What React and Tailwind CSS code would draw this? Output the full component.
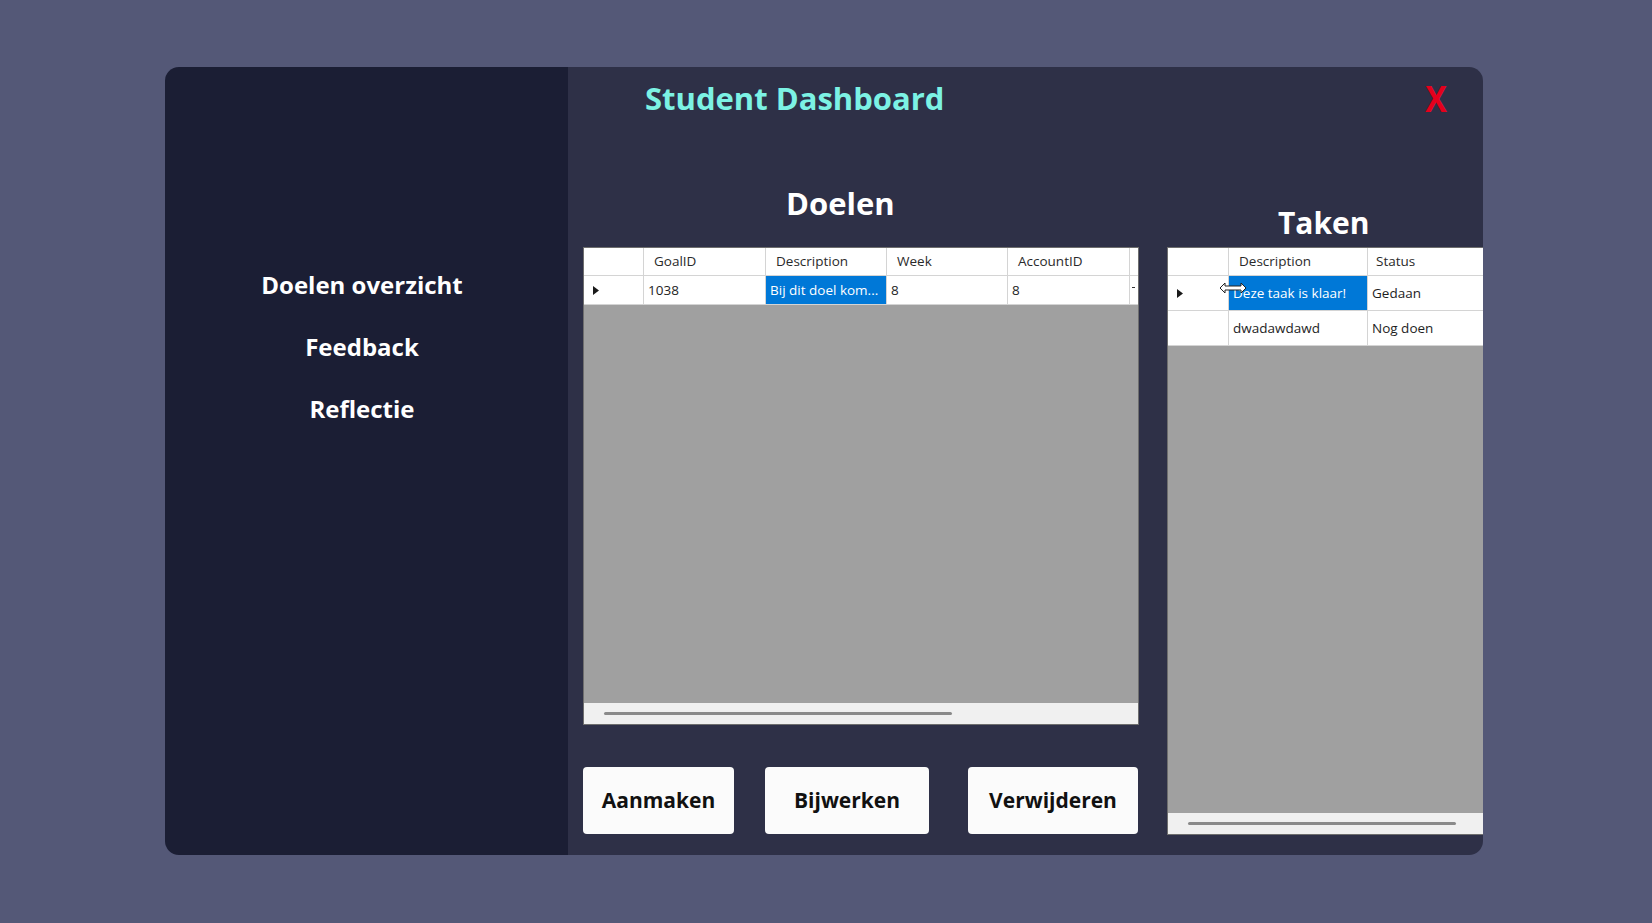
import React from "react";

const font = { fontFamily: '"Open Sans", "Noto Sans", sans-serif' };

function RowArrow() {
  return (
    <svg width="7" height="9" viewBox="0 0 7 9">
      <path d="M0 0 L6 4.5 L0 9 Z" fill="#1a1a1a" />
    </svg>
  );
}

function ResizeCursor() {
  return (
    <svg width="28" height="12" viewBox="0 0 28 12">
      <path
        d="M1 6 L6 1 L6 4 L22 4 L22 1 L27 6 L22 11 L22 8 L6 8 L6 11 Z"
        fill="#fff"
        stroke="#222"
        strokeWidth="1"
        strokeLinejoin="round"
      />
    </svg>
  );
}

function Scrollbar({ thumbLeft, thumbWidth }) {
  return (
    <div className="h-[21px] bg-[#f0f0f0] flex items-center shrink-0">
      <div className={`${thumbLeft} ${thumbWidth} h-[3px] rounded-full bg-[#8a8a8a]`} />
    </div>
  );
}

function GoalsGrid() {
  const cols = [
    { label: "GoalID", w: "w-[122px]" },
    { label: "Description", w: "w-[121px]" },
    { label: "Week", w: "w-[121px]" },
    { label: "AccountID", w: "w-[122px]" },
  ];
  return (
    <div className="w-[556px] h-[478px] flex flex-col bg-[#a0a0a0] border border-[#6e6e6e] overflow-hidden text-[13.5px] text-[#1e1e1e]">
      {/* header */}
      <div className="flex h-[28px] bg-white border-b border-[#d4d4d4] shrink-0">
        <div className="w-[60px] border-r border-[#d4d4d4] shrink-0" />
        {cols.map((c) => (
          <div
            key={c.label}
            className={`${c.w} shrink-0 border-r border-[#d4d4d4] flex items-center pl-[10px] text-[#2a2a2a]`}
          >
            {c.label}
          </div>
        ))}
        <div className="flex-1" />
      </div>
      {/* row */}
      <div className="flex h-[29px] bg-white border-b border-[#d4d4d4] shrink-0">
        <div className="w-[60px] border-r border-[#d4d4d4] shrink-0 flex items-center pl-[9px]">
          <RowArrow />
        </div>
        <div className="w-[122px] shrink-0 border-r border-[#d4d4d4] flex items-center pl-[4px]">1038</div>
        <div className="w-[121px] shrink-0 border-r border-[#d4d4d4] flex items-center pl-[4px] bg-[#0078d7] text-white whitespace-nowrap overflow-hidden">
          Bij dit doel kom...
        </div>
        <div className="w-[121px] shrink-0 border-r border-[#d4d4d4] flex items-center pl-[4px]">8</div>
        <div className="w-[122px] shrink-0 border-r border-[#d4d4d4] flex items-center pl-[4px]">8</div>
        <div className="flex-1 flex items-center pl-[2px]">
          <div className="w-[3px] h-[1px] bg-[#333] mb-[6px]" />
        </div>
      </div>
      <div className="flex-1" />
      <Scrollbar thumbLeft="ml-[20px]" thumbWidth="w-[348px]" />
    </div>
  );
}

function TasksGrid() {
  const rows = [
    { d: "Deze taak is klaar!", s: "Gedaan", sel: true },
    { d: "dwadawdawd", s: "Nog doen", sel: false },
  ];
  return (
    <div className="relative w-[340px] h-[588px] flex flex-col bg-[#a0a0a0] border border-[#6e6e6e] overflow-hidden text-[13.5px] text-[#1e1e1e]">
      <div className="flex h-[28px] bg-white border-b border-[#d4d4d4] shrink-0">
        <div className="w-[61px] border-r border-[#d4d4d4] shrink-0" />
        <div className="w-[139px] shrink-0 border-r border-[#d4d4d4] flex items-center pl-[10px] text-[#2a2a2a]">
          Description
        </div>
        <div className="w-[139px] shrink-0 border-r border-[#d4d4d4] flex items-center pl-[8px] text-[#2a2a2a]">
          Status
        </div>
      </div>
      {rows.map((r) => (
        <div key={r.d} className="flex h-[35px] bg-white border-b border-[#d4d4d4] shrink-0">
          <div className="w-[61px] border-r border-[#d4d4d4] shrink-0 flex items-center pl-[9px]">
            {r.sel && <RowArrow />}
          </div>
          <div
            className={`w-[139px] shrink-0 border-r border-[#d4d4d4] flex items-center pl-[4px] whitespace-nowrap ${
              r.sel ? "bg-[#0078d7] text-white" : ""
            }`}
          >
            {r.d}
          </div>
          <div className="w-[139px] shrink-0 border-r border-[#d4d4d4] flex items-center pl-[4px]">{r.s}</div>
        </div>
      ))}
      <div className="flex-1" />
      <Scrollbar thumbLeft="ml-[20px]" thumbWidth="w-[268px]" />
      <div className="absolute left-[51px] top-[34px]">
        <ResizeCursor />
      </div>
    </div>
  );
}

export default function App() {
  return (
    <div className="w-[1652px] h-[923px] bg-[#545877] pl-[165px] pt-[67px]" style={font}>
      <div className="flex w-[1318px] h-[788px] rounded-[14px] overflow-hidden">
        {/* Sidebar */}
        <div className="w-[403px] shrink-0 bg-[#1b1e34] flex flex-col pt-[187px] pr-[9px] text-white font-bold text-[24px]">
          {["Doelen overzicht", "Feedback", "Reflectie"].map((t) => (
            <div key={t} className="h-[62px] flex items-center justify-center">
              {t}
            </div>
          ))}
        </div>

        {/* Main */}
        <div className="flex-1 min-w-0 bg-[#2e3047] flex flex-col overflow-hidden">
          <div className="h-[63px] flex items-center justify-between pl-[77px] pr-[35px] shrink-0">
            <span className="text-[31px] font-bold text-[#7cf2e4] leading-none">Student Dashboard</span>
            <span className="text-[36px] font-bold text-[#e4001c] leading-none scale-x-90">X</span>
          </div>

          <div className="flex">
            {/* Doelen */}
            <div className="ml-[15px] w-[556px] shrink-0 flex flex-col">
              <div className="h-[117px] pt-[53px] pl-[203px]">
                <div className="h-[40px] leading-[40px] text-[31px] font-bold text-white">Doelen</div>
              </div>
              <GoalsGrid />
              <div className="flex mt-[42px] text-[21px] font-bold text-[#111]">
                <button className="w-[151px] h-[67px] rounded-[4px] bg-[#fbfbfb]">Aanmaken</button>
                <button className="ml-[31px] w-[164px] h-[67px] rounded-[4px] bg-[#fbfbfb]">Bijwerken</button>
                <button className="ml-[39px] w-[170px] h-[67px] rounded-[4px] bg-[#fbfbfb]">Verwijderen</button>
              </div>
            </div>

            {/* Taken */}
            <div className="ml-[28px] w-[340px] shrink-0 flex flex-col">
              <div className="h-[117px] pt-[73px] pl-[111px]">
                <div className="h-[40px] leading-[40px] text-[30px] font-bold text-white">Taken</div>
              </div>
              <TasksGrid />
            </div>
          </div>
        </div>
      </div>
    </div>
  );
}
